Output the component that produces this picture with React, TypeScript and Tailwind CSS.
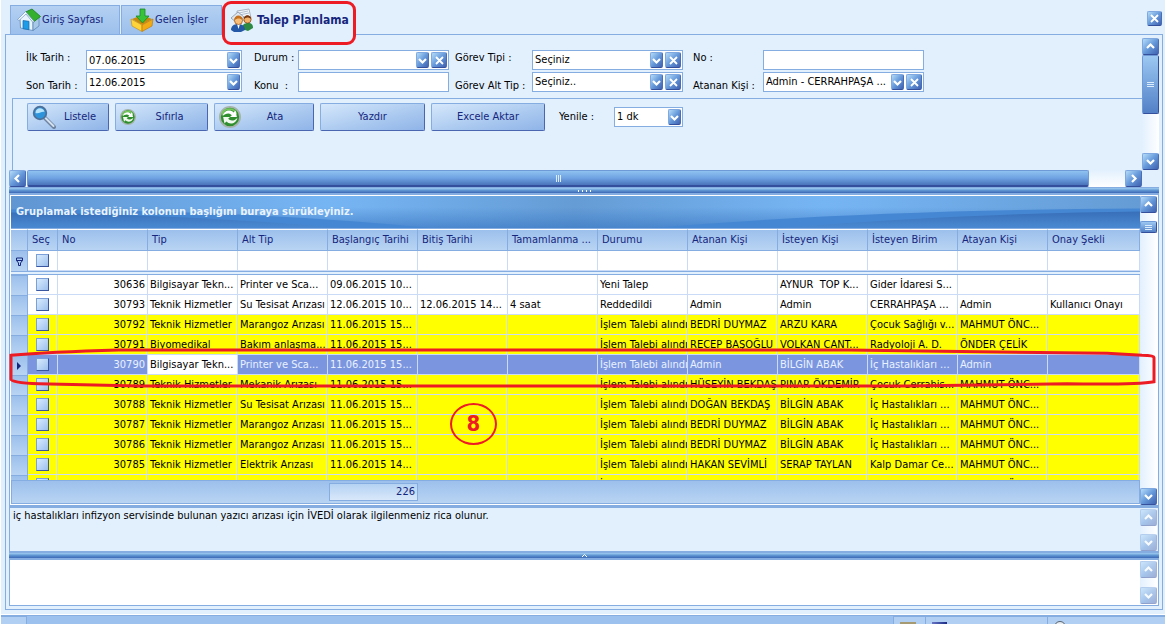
import { useState, type ReactNode } from "react";

type Direction = "up" | "down" | "left" | "right";

const chevrons: Record<Direction, string> = {
  up: "M1 6 4.5 2.5 8 6",
  down: "M1 3 4.5 6.5 8 3",
  left: "M6 1 2.5 4.5 6 8",
  right: "M3 1 6.5 4.5 3 8",
};

function Chevron({ direction }: { direction: Direction }) {
  return (
    <svg viewBox="0 0 9 9" className="h-[9px] w-[9px]" fill="none" stroke="#fff" strokeWidth="2.2" aria-hidden="true">
      <path d={chevrons[direction]} />
    </svg>
  );
}

function Cross() {
  return (
    <svg viewBox="0 0 9 9" className="h-[9px] w-[9px]" fill="none" stroke="#fff" strokeWidth="1.8" aria-hidden="true">
      <path d="M1 1 8 8M8 1 1 8" />
    </svg>
  );
}

const bevel =
  "flex shrink-0 items-center justify-center rounded-[2px] border border-[#7fa8e0] border-b-[#34509c] border-r-[#4a6db5] bg-linear-to-br from-[#b4dcf8] via-[#6699da] to-[#4062b0]";

function ScrollButton({ direction, label, disabled }: { direction: Direction; label: string; disabled?: boolean }) {
  return (
    <button type="button" aria-label={label} disabled={disabled} className={`${bevel} h-[17px] w-[17px] disabled:opacity-50`}>
      <Chevron direction={direction} />
    </button>
  );
}

function ScrollTrack({ label, disabled, children }: { label: string; disabled?: boolean; children?: ReactNode }) {
  return (
    <div className="flex w-[17px] shrink-0 flex-col bg-linear-to-r from-[#e2f0fe] to-white">
      <ScrollButton direction="up" label={`${label} yukarı`} disabled={disabled} />
      <div className="flex-1">{children}</div>
      <ScrollButton direction="down" label={`${label} aşağı`} disabled={disabled} />
    </div>
  );
}

function Splitter({ children }: { children?: ReactNode }) {
  return (
    <div className="flex h-[7px] shrink-0 items-center justify-center border-y border-[#86ade2] bg-linear-to-b from-[#a0cef2] via-[#5d93d0] to-[#3d68b5]">
      {children}
    </div>
  );
}

type FieldProps = {
  id: string;
  label: string;
  value?: string;
  kind?: "text" | "date" | "select";
  clearable?: boolean;
  low?: boolean;
  labelClass: string;
  boxClass: string;
};

function Field({ id, label, value = "", kind = "text", clearable, low, labelClass, boxClass }: FieldProps) {
  return (
    <div className={`flex ${low ? "h-[22px] items-end" : "h-5 items-start"}`}>
      <label htmlFor={id} className={`shrink-0 whitespace-pre leading-4 ${labelClass}`}>
        {label}
      </label>
      <div className={`flex h-5 items-center gap-0.5 self-start border border-[#86ade2] bg-white pr-px ${boxClass}`}>
        {kind === "select" ? (
          <span className="relative flex h-full min-w-0 flex-1 items-center">
            <select id={id} defaultValue={value} className="h-full w-full appearance-none bg-transparent pl-0.5 outline-none">
              <option>{value}</option>
            </select>
            <span className={`${bevel} pointer-events-none absolute right-0 h-4 w-[13px]`}>
              <Chevron direction="down" />
            </span>
          </span>
        ) : (
          <input id={id} defaultValue={value} className="h-full w-0 flex-1 bg-transparent pl-0.5 outline-none" />
        )}
        {kind === "date" && (
          <button type="button" aria-label={`${label} takvim`} className={`${bevel} h-4 w-[13px]`}>
            <Chevron direction="down" />
          </button>
        )}
        {clearable && (
          <button type="button" aria-label={`${label} temizle`} className={`${bevel} h-4 w-4`}>
            <Cross />
          </button>
        )}
      </div>
    </div>
  );
}

function HouseIcon() {
  return (
    <svg viewBox="0 0 24 24" className="h-6 w-6" aria-hidden="true">
      <path d="M3 11 9 5l7 8.500v9L3.500 20z" fill="#e9f3fc" stroke="#5d88b8" strokeWidth=".8" />
      <path d="m16 13.500 6-4.500v9L16 22.500z" fill="#a7c8e6" stroke="#5d88b8" strokeWidth=".8" />
      <path d="m8.500 4 6.500-3 8.500 7.500-7 5.500z" fill="#35b02e" stroke="#1a7d1d" strokeWidth=".8" />
      <path d="m8.500 3.500-8 8 1.500 1L9 6l7 8.500 1.200-1z" fill="#f5fbff" stroke="#5d88b8" strokeWidth=".6" />
      <path d="m6 12.500 6 .8v8.400l-6-1z" fill="#1e9ce8" stroke="#1168ae" strokeWidth=".7" />
    </svg>
  );
}

function InboxIcon() {
  return (
    <svg viewBox="0 0 24 24" className="h-6 w-6" aria-hidden="true">
      <path d="m2 11 10-4 10 4-10 6z" fill="#c98a09" />
      <path d="m1 11 11 6v6.500L2 18z" fill="#ffd43b" stroke="#c99415" strokeWidth=".7" />
      <path d="m23 11-11 6v6.500L22 18z" fill="#f0aa16" stroke="#bd7c0c" strokeWidth=".7" />
      <path d="M10 1h5v7h4l-6.500 7L6 8h4z" fill="#37c23a" stroke="#178a25" strokeWidth=".8" />
    </svg>
  );
}

function PeopleIcon() {
  return (
    <svg viewBox="0 0 24 24" className="h-6 w-6" aria-hidden="true">
      <path d="m7 3 12-2 2 9-13 4z" fill="#f5f7fa" stroke="#97a2b0" strokeWidth=".8" />
      <path d="m9 5 9-2M9 7l10-2" stroke="#9fb1c7" strokeWidth=".8" />
      <path d="M1 10 8 4l6 5-7 6z" fill="#dfe5ec" stroke="#8593a5" strokeWidth=".8" />
      <path d="M12 21c0-4 2-6 6-6s5 2 5 5l-5 3z" fill="#2d8a43" />
      <circle cx="17.500" cy="11.500" r="3.600" fill="#f5b36a" stroke="#8b4a16" strokeWidth=".8" />
      <path d="M13.800 11c0-5 7-5 7.500 0-3-2-5-2-7.500 0z" fill="#7b3b12" />
      <path d="M1 22c0-4 3-6 7-6s7 2 7 6l-4 2H4z" fill="#2459a8" />
      <path d="m7 16 1.500 5L10 16z" fill="#fff" />
      <circle cx="8.500" cy="12.500" r="4" fill="#f8bf79" stroke="#a15c1c" strokeWidth=".8" />
      <path d="M4.300 12c0-6 8-6 8.400 0-3-2-5-2-8.400 0z" fill="#c4701d" />
    </svg>
  );
}

function SearchIcon() {
  return (
    <svg viewBox="0 0 24 24" className="h-6 w-6" aria-hidden="true">
      <path d="m13 13 9 9" stroke="#6d83a0" strokeWidth="4" strokeLinecap="round" />
      <path d="m13.500 13 8 8" stroke="#d3e0ee" strokeWidth="2" strokeLinecap="round" />
      <circle cx="8" cy="8" r="6.300" fill="#2d94dc" stroke="#4c7099" strokeWidth="1.800" />
      <path d="M3.500 8c0-6 8-6 9-1-3-1-5 2-9 1z" fill="#b7e4fb" />
    </svg>
  );
}

function RefreshIcon({ className }: { className: string }) {
  return (
    <svg viewBox="0 0 24 24" className={className} aria-hidden="true">
      <circle cx="12" cy="12" r="11" fill="#2f8f2e" stroke="#a5b3ab" strokeWidth="2" />
      <path d="M3.500 9.500C5 1.500 17 1.500 19 9" fill="none" stroke="#77c95b" strokeWidth="2" />
      <path d="M4 11c1-6 8-8 12-4l2-2 1.500 7H12l2-2c-3-3-7-2-10 1z" fill="#fff" />
      <path d="M20 13c-1 6-8 8-12 4l-2 2-1.500-7H12l-2 2c3 3 7 2 10-1z" fill="#f1f8ee" />
    </svg>
  );
}

function ActionButton({ icon, className, children }: { icon?: ReactNode; className: string; children: ReactNode }) {
  return (
    <button
      type="button"
      className={`flex h-7 items-center rounded-[2px] border border-[#86ade2] border-b-[#4a66b0] border-r-[#4a66b0] bg-linear-to-br from-[#d6e8fb] via-[#b0cdf1] to-[#8fb4e8] pl-1 pr-1 text-[#15267c] ${className}`}
    >
      {icon}
      <span className="flex-1 text-center">{children}</span>
    </button>
  );
}

function Tabs() {
  const tab =
    "flex h-[29px] items-center gap-px border border-b-0 border-[#86ade2] bg-linear-to-b from-[#b4d0f2] to-[#9cc0ec] text-[#15267c]";
  return (
    <div className="flex h-[34px] shrink-0 items-end pl-[9px]" role="tablist">
      <button type="button" role="tab" aria-selected={false} className={`${tab} mr-px w-[110px] pl-1.5`}>
        <HouseIcon />
        Giriş Sayfası
      </button>
      <button type="button" role="tab" aria-selected={false} className={`${tab} w-[101px] pl-2`}>
        <InboxIcon />
        Gelen İşler
      </button>
      <div className="relative z-10 -mb-px h-[30px] w-[134px] bg-[#e2f0fe]">
        <button
          type="button"
          role="tab"
          aria-selected={true}
          className="flex h-[29px] w-full items-center gap-[3px] pl-2 text-xs font-bold text-[#15267c]"
        >
          <PeopleIcon />
          Talep Planlama
        </button>
        <span className="pointer-events-none absolute -top-1 left-0 h-11 w-[134px] rounded-[9px] border-[3px] border-[#ed1c24]" />
      </div>
      <button type="button" aria-label="Sekmeyi kapat" className={`${bevel} mb-2 ml-auto mr-[3px] h-[15px] w-[15px]`}>
        <Cross />
      </button>
    </div>
  );
}

function FilterPanel() {
  return (
    <div className="flex h-[132px] shrink-0 pl-[3px]">
      <div className="min-w-0 flex-1 pt-3">
        <div className="flex pl-3.5">
          <div className="mr-3 flex flex-col gap-0.5">
            <Field id="ilk-tarih" label="İlk Tarih :" value="07.06.2015" kind="date" labelClass="w-[60px]" boxClass="w-[156px]" />
            <Field id="son-tarih" label="Son Tarih :" value="12.06.2015" kind="date" low labelClass="w-[60px]" boxClass="w-[156px]" />
          </div>
          <div className="mr-1.5 flex flex-col gap-0.5">
            <Field id="durum" label="Durum :" kind="select" clearable labelClass="w-11" boxClass="w-[151px]" />
            <Field id="konu" label="Konu  :" low labelClass="w-11" boxClass="w-[151px]" />
          </div>
          <div className="mr-2.5 flex flex-col gap-0.5">
            <Field id="gorev-tipi" label="Görev Tipi :" value="Seçiniz" kind="select" clearable labelClass="w-[77px]" boxClass="w-[151px]" />
            <Field id="gorev-alt" label="Görev Alt Tip :" value="Seçiniz.." kind="select" clearable low labelClass="w-[77px]" boxClass="w-[151px]" />
          </div>
          <div className="flex flex-col gap-0.5">
            <Field id="no" label="No :" labelClass="w-[70px]" boxClass="w-[161px]" />
            <Field id="atanan" label="Atanan Kişi :" value="Admin - CERRAHPAŞA ..." kind="select" clearable low labelClass="w-[70px]" boxClass="w-[161px]" />
          </div>
        </div>
        <div className="mt-1 flex h-[72px] items-start gap-1.5 border-l border-t border-[#86ade2] pl-3.5 pt-1">
          <ActionButton icon={<SearchIcon />} className="w-[82px]">
            Listele
          </ActionButton>
          <ActionButton icon={<RefreshIcon className="h-4 w-4" />} className="w-[93px]">
            Sıfırla
          </ActionButton>
          <ActionButton icon={<RefreshIcon className="h-[22px] w-[22px]" />} className="w-[100px]">
            Ata
          </ActionButton>
          <ActionButton className="w-[105px]">Yazdır</ActionButton>
          <ActionButton className="w-[114px]">Excele Aktar</ActionButton>
          <div className="ml-2 flex items-center pt-1">
            <label htmlFor="yenile" className="w-[55px]">
              Yenile :
            </label>
            <span className="relative flex h-5 w-[69px] items-center border border-[#86ade2] bg-white">
              <select id="yenile" className="h-full w-full appearance-none bg-transparent pl-0.5 outline-none">
                <option>1 dk</option>
              </select>
              <span className={`${bevel} pointer-events-none absolute right-px h-4 w-[13px]`}>
                <Chevron direction="down" />
              </span>
            </span>
          </div>
        </div>
      </div>
      <ScrollTrack label="Filtre">
        <div className="flex h-[59px] flex-col items-center justify-center gap-px rounded-[2px] border border-[#6f9ad8] border-b-[#34509c] border-r-[#34509c] bg-linear-to-b from-[#9cc8f2] to-[#5380c6]">
          <i className="h-px w-[7px] bg-[#dcecff]" />
          <i className="h-px w-[7px] bg-[#dcecff]" />
          <i className="h-px w-[7px] bg-[#dcecff]" />
        </div>
      </ScrollTrack>
    </div>
  );
}

const columns = [
  "No",
  "Tip",
  "Alt Tip",
  "Başlangıç Tarihi",
  "Bitiş Tarihi",
  "Tamamlanma ...",
  "Durumu",
  "Atanan Kişi",
  "İsteyen Kişi",
  "İsteyen Birim",
  "Atayan Kişi",
  "Onay Şekli",
];

const TH = "Teknik Hizmetler";
const IT = "İşlem Talebi alındı";
const MO = "MAHMUT ÖNC...";

const rows = [
  ["30636", "Bilgisayar Tekn...", "Printer ve Sca...", "09.06.2015 10...", "", "", "Yeni Talep", "", "AYNUR  TOP K...", "Gider İdaresi S...", "", ""],
  ["30793", TH, "Su Tesisat Arızası", "12.06.2015 10...", "12.06.2015 14...", "4 saat", "Reddedildi", "Admin", "Admin", "CERRAHPAŞA ...", "Admin", "Kullanıcı Onayı"],
  ["30792", TH, "Marangoz Arızası", "11.06.2015 15...", "", "", IT, "BEDRİ DUYMAZ", "ARZU KARA", "Çocuk Sağlığı v...", MO, ""],
  ["30791", "Biyomedikal", "Bakım anlaşma...", "11.06.2015 15...", "", "", IT, "RECEP BAŞOĞLU", "VOLKAN CANT...", "Radyoloji A. D.", "ÖNDER ÇELİK", ""],
  ["30790", "Bilgisayar Tekn...", "Printer ve Sca...", "11.06.2015 15...", "", "", IT, "Admin", "BİLGİN ABAK", "İç Hastalıkları ...", "Admin", ""],
  ["30789", TH, "Mekanik Arızası", "11.06.2015 15...", "", "", IT, "HÜSEYİN BEKDAŞ", "PINAR ÖKDEMİR", "Çocuk Cerrahis...", MO, ""],
  ["30788", TH, "Su Tesisat Arızası", "11.06.2015 15...", "", "", IT, "DOĞAN BEKDAŞ", "BİLGİN ABAK", "İç Hastalıkları ...", MO, ""],
  ["30787", TH, "Marangoz Arızası", "11.06.2015 15...", "", "", IT, "BEDRİ DUYMAZ", "BİLGİN ABAK", "İç Hastalıkları ...", MO, ""],
  ["30786", TH, "Marangoz Arızası", "11.06.2015 15...", "", "", IT, "BEDRİ DUYMAZ", "BİLGİN ABAK", "İç Hastalıkları ...", MO, ""],
  ["30785", TH, "Elektrik Arızası", "11.06.2015 14...", "", "", IT, "HAKAN SEVİMLİ", "SERAP TAYLAN", "Kalp Damar Ce...", MO, ""],
  ["30784", TH, "", "", "", "", IT, "", "", "", MO, ""],
];

const selectedNo = "30790";
const plainRows = ["30636", "30793"];

const checkbox =
  "block h-[13px] w-[13px] mx-auto appearance-none border border-[#7b9fd8] border-b-[#3a56a0] border-r-[#3a56a0] bg-linear-to-br from-[#d8ecfd] to-[#9dbfec]";
const indicator = "border-r border-t border-r-[#86ade2] border-t-[#86ade2] bg-linear-to-b from-[#9cc0ec] to-[#b9d4f3] p-0";

function Banner() {
  return (
    <div className="relative h-[33px] shrink-0 border-b border-[#86ade2]">
      <svg viewBox="0 0 1129 33" preserveAspectRatio="none" className="absolute inset-0 h-full w-full" aria-hidden="true">
        <defs>
          <linearGradient id="sky">
            <stop offset="0" stopColor="#6096d2" />
            <stop offset=".28" stopColor="#76b5f4" />
            <stop offset=".5" stopColor="#659cd5" />
            <stop offset=".72" stopColor="#76b5f4" />
            <stop offset="1" stopColor="#659cd5" />
          </linearGradient>
          <linearGradient id="depth" x1="0" y1="0" x2="0" y2="1">
            <stop offset=".35" stopColor="#3f7cc6" stopOpacity="0" />
            <stop offset="1" stopColor="#3f7cc6" stopOpacity=".75" />
          </linearGradient>
          <linearGradient id="hill" x1="0" y1="0" x2="0" y2="1">
            <stop offset="0" stopColor="#386fb8" />
            <stop offset="1" stopColor="#4a8ad2" />
          </linearGradient>
        </defs>
        <path d="M0 0h1129v33H0z" fill="url(#sky)" />
        <path d="M0 0h1129v33H0z" fill="url(#depth)" />
        <path d="M0 14q230 0 420 19H0zM1129 13Q860 14 640 33h489z" fill="#4687d3" />
        <path d="M0 17q180 2 330 16H0zM1129 16Q950 18 770 33h359z" fill="url(#hill)" />
      </svg>
      <p className="relative pl-[5px] pt-2 font-bold leading-4 text-[#e8f3ff]">
        Gruplamak istediğiniz kolonun başlığını buraya sürükleyiniz.
      </p>
    </div>
  );
}

function GridTable() {
  const [checked, setChecked] = useState<string[]>([]);

  const toggle = (no: string) =>
    setChecked((current) => (current.includes(no) ? current.filter((item) => item !== no) : [...current, no]));

  return (
    <table className="w-full table-fixed border-separate border-spacing-0">
      <colgroup>
        <col className="w-[17px]" />
        <col className="w-[30px]" />
        {columns.map((name) => (
          <col key={name} className={name === "Onay Şekli" ? "" : "w-[90px]"} />
        ))}
      </colgroup>
      <thead>
        <tr className="h-[22px] text-left text-[#15267c]">
          <th aria-label="Satır" className="border-b border-r border-t border-[#86ade2] border-t-white bg-linear-to-b from-[#9cc0ec] to-[#b9d4f3] p-0" />
          {["Seç", ...columns].map((name) => (
            <th
              key={name}
              className="overflow-hidden whitespace-nowrap border-b border-r border-t border-[#86ade2] border-t-white bg-linear-to-b from-[#9cc0ec] to-[#b9d4f3] p-0 pl-1 font-normal"
            >
              {name}
            </th>
          ))}
        </tr>
        <tr className="h-5 bg-white">
          <td className="border-r border-[#86ade2] bg-linear-to-b from-[#9cc0ec] to-[#b9d4f3] p-0">
            <svg viewBox="0 0 9 9" className="mx-auto h-[9px] w-[9px]" fill="none" stroke="#15267c" aria-hidden="true">
              <path d="M1.500 1h6v2.500h-6zM1.500 3.500l2 2.500v2.500h2V6l2-2.500" />
            </svg>
          </td>
          <td className="border-b border-r border-[#c9dbf7] p-0">
            <input type="checkbox" aria-label="Seçim filtresi" className={checkbox} />
          </td>
          {columns.map((name) => (
            <td key={name} className="border-b border-r border-[#c9dbf7] p-0">
              <input aria-label={`${name} filtresi`} className="block h-[18px] w-full bg-transparent px-0.5 outline-none" />
            </td>
          ))}
        </tr>
        <tr className="h-1">
          <td colSpan={14} className="h-1 border-y border-[#86ade2] bg-[#e2f0fe] p-0" />
        </tr>
      </thead>
      <tbody>
        {rows.map((cells) => {
          const no = cells[0];
          const selected = no === selectedNo;
          const rowColor = selected ? "bg-[#7b96df] text-[#eaf1ff]" : plainRows.includes(no) ? "bg-white" : "bg-[#ffff00]";
          return (
            <tr key={no} aria-selected={selected} className={`h-5 ${rowColor}`}>
              <td className={indicator}>
                {selected && (
                  <svg viewBox="0 0 4 8" className="mx-auto h-2 w-1" fill="#15267c" aria-hidden="true">
                    <path d="M0 0l4 4-4 4z" />
                  </svg>
                )}
              </td>
              <td className="border-b border-r border-[#c9dbf7] p-0">
                <input
                  type="checkbox"
                  aria-label={`${no} seç`}
                  checked={checked.includes(no)}
                  onChange={() => toggle(no)}
                  className={checkbox}
                />
              </td>
              {cells.map((text, i) => (
                <td
                  key={columns[i]}
                  className={`overflow-hidden whitespace-pre border-b border-r border-[#c9dbf7] p-0 leading-4 ${
                    i === 0 ? "pr-0.5 text-right" : "pl-0.5"
                  } ${selected && i === 1 ? "bg-white text-black" : ""}`}
                >
                  {text}
                </td>
              ))}
            </tr>
          );
        })}
      </tbody>
    </table>
  );
}

function Annotations() {
  return (
    <div className="pointer-events-none absolute inset-0">
      <svg
        viewBox="0 0 1150 38"
        preserveAspectRatio="none"
        className="absolute -left-px top-[153px] h-10 w-full"
        fill="none"
        stroke="#ed1c24"
        strokeWidth="3"
        aria-hidden="true"
      >
        <path vectorEffect="non-scaling-stroke" d="M2 7Q40 4 110 2H840L1100 5 1135 7Q1147 7 1147 9V32Q1130 35 1060 34L900 36H130L30 34Q2 33 2 30Z" />
      </svg>
      <span className="absolute left-[440px] top-[208px] flex h-[42px] w-[47px] items-center justify-center rounded-[50%] border-2 border-[#ed1c24] text-[22px] font-bold text-[#ed1c24]">
        8
      </span>
    </div>
  );
}

function DataGrid() {
  return (
    <div className="relative flex min-h-0 flex-1 border border-[#86ade2] bg-white pl-px pr-px pt-px">
      <div className="flex min-w-0 flex-1 flex-col">
        <Banner />
        <div className="min-h-0 flex-1 overflow-hidden">
          <GridTable />
        </div>
        <div className="mb-px h-6 shrink-0 border border-[#86ade2] bg-linear-to-b from-[#9cc0ec] to-[#b9d4f3] pt-0.5">
          <output className="ml-[317px] block h-[18px] w-[89px] border border-[#86ade2] bg-linear-to-b from-[#b4d2f3] to-[#d9e8fa] pr-0.5 text-right leading-4 text-[#15267c]">
            226
          </output>
        </div>
      </div>
      <ScrollTrack label="Tablo">
        <div className="mt-2 flex h-3 flex-col items-center justify-center gap-px rounded-[2px] border border-[#6f9ad8] border-b-[#34509c] border-r-[#34509c] bg-linear-to-b from-[#9cc8f2] to-[#5380c6]">
          <i className="h-px w-[7px] bg-[#dcecff]" />
          <i className="h-px w-[7px] bg-[#dcecff]" />
          <i className="h-px w-[7px] bg-[#dcecff]" />
        </div>
      </ScrollTrack>
      <Annotations />
    </div>
  );
}

function StatusBar() {
  const section = "border-l border-t border-[#86ade2] bg-[#b0cff2] pl-1.5";
  return (
    <footer className="flex h-[9px] shrink-0 overflow-hidden border-t border-[#86ade2] bg-[#9dc1ee]">
      <div className="w-[26px] border-r border-t border-[#86ade2] bg-[#b0cff2]" />
      <div className="flex-1" />
      <div className={`${section} w-8`}>
        <i className="mt-[5px] block h-1 w-4 bg-[#a59a72]" />
      </div>
      <div className={`${section} w-[122px]`}>
        <i className="mt-[5px] block h-1 w-[15px] bg-linear-to-r from-[#6a74c4] to-[#1c2a86]" />
      </div>
      <div className={`${section} w-[118px]`}>
        <i className="mt-1 block h-4 w-3 rounded-full border border-[#56626e] bg-[#e6ecf2]" />
      </div>
    </footer>
  );
}

export default function App() {
  return (
    <div className="flex h-screen min-h-[600px] flex-col overflow-hidden border-l border-white bg-[#e2f0fe] font-['DejaVu_Sans_Condensed','DejaVu_Sans',sans-serif] text-[11px] leading-4 text-black">
      <Tabs />
      <main className="ml-1 mr-0.5 flex min-h-0 flex-1 flex-col border border-[#86ade2] p-[3px]">
        <FilterPanel />
        <div className="mr-[17px] flex shrink-0 items-center">
          <ScrollButton direction="left" label="Sola kaydır" />
          <div className="flex h-[17px] flex-1 bg-linear-to-b from-[#e2f0fe] to-white pl-px pr-9">
            <div className="flex flex-1 items-center justify-center gap-px rounded-[2px] border border-[#6f9ad8] border-b-2 border-b-[#34509c] bg-linear-to-b from-[#8fc2f0] via-[#6fa3e2] to-[#4a73bb]">
              <i className="h-[7px] w-px bg-[#dcecff]" />
              <i className="h-[7px] w-px bg-[#dcecff]" />
              <i className="h-[7px] w-px bg-[#dcecff]" />
            </div>
          </div>
          <ScrollButton direction="right" label="Sağa kaydır" />
        </div>
        <Splitter>
          <span className="flex gap-[3px]">
            <i className="h-0.5 w-px bg-white" />
            <i className="h-0.5 w-px bg-white" />
            <i className="h-0.5 w-px bg-white" />
            <i className="h-0.5 w-px bg-white" />
          </span>
        </Splitter>
        <DataGrid />
        <section className="flex h-[46px] shrink-0 border border-t-2 border-[#86ade2] pr-px pt-px">
          <p className="min-w-0 flex-1 pl-[3px] leading-[14px]">
            iç hastalıkları infizyon servisinde bulunan yazıcı arızası için İVEDİ olarak ilgilenmeniz rica olunur.
          </p>
          <ScrollTrack label="Açıklama" disabled />
        </section>
        <Splitter>
          <svg viewBox="0 0 5 3" className="h-[3px] w-[5px]" fill="none" stroke="#fff" aria-hidden="true">
            <path d="M0 3 2.500.5 5 3" />
          </svg>
        </Splitter>
        <section className="flex h-[47px] shrink-0 border border-[#86ade2] bg-white py-px pr-px">
          <textarea aria-label="Not" className="min-w-0 flex-1 resize-none bg-transparent px-1 outline-none" />
          <ScrollTrack label="Not" disabled />
        </section>
      </main>
      <div className="h-[5px] shrink-0 border-b border-white" />
      <StatusBar />
    </div>
  );
}
